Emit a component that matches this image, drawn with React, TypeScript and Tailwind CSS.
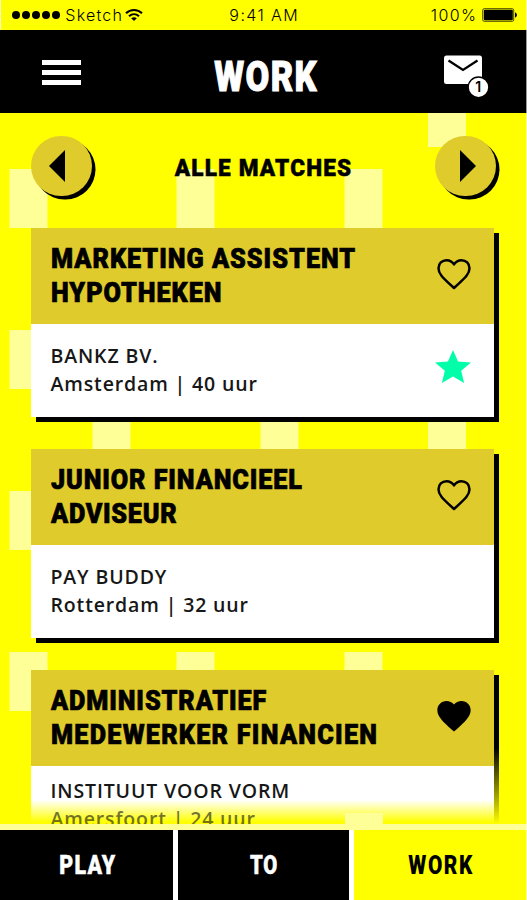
import React from "react";

interface Job {
   title: string[];
   spacing: string[];
   company: string;
   place: string;
   liked?: boolean;
   starred?: boolean;
   faded?: boolean;
}

const jobs: Job[] = [
   {
      title: ["MARKETING ASSISTENT", "HYPOTHEKEN"],
      spacing: ["tracking-[1.1px]", "tracking-[1.1px]"],
      company: "BANKZ BV.",
      place: "Amsterdam | 40 uur",
      starred: true,
   },
   {
      title: ["JUNIOR FINANCIEEL", "ADVISEUR"],
      spacing: ["tracking-[1px]", "tracking-[0.8px]"],
      company: "PAY BUDDY",
      place: "Rotterdam | 32 uur",
   },
   {
      title: ["ADMINISTRATIEF", "MEDEWERKER FINANCIEN"],
      spacing: ["tracking-[1px]", "tracking-[1.4px]"],
      company: "INSTITUUT VOOR VORM",
      place: "Amersfoort | 24 uur",
      liked: true,
      faded: true,
   },
];

// pale blocks of the wallpaper: x, y, height
const blocks = [
   [428, 0, 34],
   [9.5, 56, 59],
   [176.5, 56, 59],
   [344.5, 56, 59],
   [9.5, 217, 59],
   [92.5, 297, 59],
   [260.5, 297, 59],
   [428, 297, 59],
   [9.5, 378, 59],
   [9.5, 539, 59],
   [176.5, 539, 59],
   [344.5, 539, 59],
];

const StatusBar: React.FC = () => (
   <div className="flex h-[29.5px] shrink-0 items-center border-l border-[#ffffc8] bg-[#ffff00] pl-[11px] font-['Inter',sans-serif] text-[16px] font-light text-black">
      <div className="flex gap-[1.6px]">
         {[1, 2, 3, 4, 5].map((dot) => (
            <span key={dot} className="h-[8.3px] w-[8.3px] rounded-full bg-black" />
         ))}
      </div>
      <span className="ml-[5.5px] w-[60px] tracking-[1.2px]">Sketch</span>
      <svg className="h-[14px] w-[18px]" viewBox="0 0 18 14" fill="none" stroke="black" strokeWidth="2">
         <path d="M1 5.2C5.5.8 12.5.8 17 5.2M4 8.3C7 5.5 11 5.5 14 8.3" />
         <path d="M6.2 10.2C8 8.8 10 8.8 11.8 10.2L9 13Z" fill="black" stroke="none" />
      </svg>
      <span className="ml-[86px] w-[201.5px] tracking-[1.4px]">9:41 AM</span>
      <span className="w-[51.5px] tracking-[1.4px]">100%</span>
      <svg className="h-[14px] w-[36px]" viewBox="0 0 36 14">
         <rect x="0.7" y="0.7" width="31" height="12.6" rx="1.5" fill="none" stroke="#4a4a00" strokeWidth="1" />
         <rect x="1.8" y="1.8" width="29" height="10.4" rx="1" />
         <path d="M33 4.5C35.6 5 35.6 9 33 9.5Z" />
      </svg>
   </div>
);

const Header: React.FC = () => (
   <header className="flex h-[83.5px] shrink-0 items-center justify-between bg-black pl-[42px] pr-[37px]">
      <div className="mt-[3px] flex w-[39px] flex-col gap-[5px]">
         <span className="h-[5px] bg-white" />
         <span className="h-[5px] bg-white" />
         <span className="h-[5px] bg-white" />
      </div>
      <h1 className="ml-[7px] mt-[12px] scale-x-[0.82] font-['Roboto',sans-serif] text-[42px] font-black leading-[42px] tracking-[1.6px] text-white [-webkit-text-stroke:1px_#fff]">
         WORK
      </h1>
      <svg className="mt-[12px] h-[44px] w-[46px]" viewBox="0 0 46 44">
         <rect x="0" y="0.5" width="38" height="28.5" rx="2.5" fill="white" />
         <path d="M4.5 5.5L19 15L33.5 5.5" fill="none" stroke="black" strokeWidth="2.3" />
         <circle cx="34.5" cy="32.3" r="10.3" fill="white" stroke="black" strokeWidth="1.3" />
         <text x="34.3" y="37.3" textAnchor="middle" fontSize="14" fontWeight="600" fontFamily="Inter, sans-serif">
            1
         </text>
      </svg>
   </header>
);

const RoundButton: React.FC<{ next?: boolean }> = ({ next }) => (
   <button
      className={`flex h-[60px] w-[61px] items-center justify-center rounded-full bg-[#e0cb2c] shadow-[3.5px_3.5px_0_#000] ${next ? "-mr-[2px] pl-[6px]" : "pr-[8px]"}`}
   >
      <svg className="h-[32px] w-[16px]" viewBox="0 0 16 32">
         {next ? <path d="M0 0L16 16L0 32Z" /> : <path d="M16 0L0 16L16 32Z" />}
      </svg>
   </button>
);

const Heart: React.FC<{ filled?: boolean }> = ({ filled }) => (
   <svg className="h-[40px] w-[40px]" viewBox="0 0 24 24">
      {filled ? (
         <path d="M12 21.35l-1.45-1.32C5.4 15.36 2 12.28 2 8.5 2 5.42 4.42 3 7.5 3c1.74 0 3.41.81 4.5 2.09C13.09 3.81 14.76 3 16.5 3 19.58 3 22 5.42 22 8.5c0 3.78-3.4 6.86-8.55 11.54L12 21.35z" />
      ) : (
         <path
            d="M12 20.4L9.3 17.9C5.3 14.2 2.7 11.8 2.7 8.5C2.7 5.8 4.8 3.7 7.5 3.7C9.3 3.7 10.9 4.5 12 6.2C13.1 4.5 14.7 3.7 16.5 3.7C19.2 3.7 21.3 5.8 21.3 8.5C21.3 11.8 18.7 14.2 14.7 17.9Z"
            fill="none"
            stroke="black"
            strokeWidth="1.5"
            strokeLinejoin="round"
         />
      )}
   </svg>
);

const JobCard: React.FC<{ job: Job }> = ({ job }) => (
   <article className="flex h-[188.5px] shrink-0 flex-col shadow-[5px_5px_0_#000]">
      <div className="flex h-[95.5px] shrink-0 justify-between bg-[#e0cb2c] px-[20px] pt-[13.5px]">
         <h2 className="w-[370px] font-['Roboto',sans-serif] text-[28px] font-black leading-[34px] text-black [-webkit-text-stroke:0.7px_#000]">
            {job.title.map((line, i) => (
               <span
                  key={line}
                  className={`block w-max origin-left scale-x-[0.9] whitespace-nowrap ${job.spacing[i]}`}
               >
                  {line}
               </span>
            ))}
         </h2>
         <div className="mt-[12.5px]">
            <Heart filled={job.liked} />
         </div>
      </div>
      <div
         className={`flex grow justify-between pl-[20px] pr-[23px] ${
            job.faded ? "bg-[linear-gradient(#fff_34px,#ffff00_56px)] pt-[11px]" : "bg-white pt-[18px]"
         }`}
      >
         <div className="font-['Open_Sans',sans-serif] text-[19.5px] font-semibold leading-[28px] tracking-[0.86px] text-[#171717]">
            <p className="w-max">{job.company}</p>
            <p className={`w-max ${job.faded ? "opacity-60" : ""}`}>{job.place}</p>
         </div>
         {job.starred && (
            <svg className="mt-[8px] h-[33px] w-[36px]" viewBox="2 2 20 19" preserveAspectRatio="none">
               <path
                  fill="#00ffa8"
                  d="M12 17.27L18.18 21l-1.64-7.03L22 9.24l-7.19-.61L12 2 9.19 8.63 2 9.24l5.46 4.73L5.82 21z"
               />
            </svg>
         )}
      </div>
   </article>
);

const App: React.FC = () => {
   return (
      <div className="relative flex h-[900px] w-[527px] flex-col overflow-hidden bg-[#ffff00]">
         <StatusBar />
         <Header />
         <main className="relative h-[711px] shrink-0 overflow-hidden">
            <svg className="absolute inset-0 h-full w-full" viewBox="0 0 527 711">
               {blocks.map(([x, y, height]) => (
                  <rect key={`${x}-${y}`} x={x} y={y} width="38" height={height} fill="#ffff98" />
               ))}
            </svg>
            <div className="relative flex flex-col pl-[30.5px] pr-[33.5px]">
               <div className="flex h-[115px] items-center justify-between pb-[9px]">
                  <RoundButton />
                  <span className="ml-[1px] mt-[5px] scale-x-[0.92] font-['Roboto',sans-serif] text-[24.5px] font-black tracking-[1.3px] text-black [-webkit-text-stroke:0.5px_#000]">
                     ALLE MATCHES
                  </span>
                  <RoundButton next />
               </div>
               <div className="flex flex-col gap-[32.7px]">
                  {jobs.map((job) => (
                     <JobCard key={job.company} job={job} />
                  ))}
               </div>
            </div>
            <div className="absolute bottom-0 right-[28px] h-[76px] w-[5px] bg-linear-to-b from-[#ffff00]/0 to-[#ffff00]" />
            <div className="absolute bottom-0 left-[344.5px] h-[11px] w-[38px] bg-[#ffff98]" />
         </main>
         <nav className="grid h-[76px] shrink-0 grid-cols-[173px_171px_173px] gap-[5px] border-t-[6px] border-[#ffff98] bg-white font-['Roboto',sans-serif] text-[26px] font-black text-white">
            <button className="bg-black">
               <span className="ml-[3px] inline-block scale-x-[0.82] tracking-[1.6px] [-webkit-text-stroke:0.5px_#fff]">PLAY</span>
            </button>
            <button className="bg-black">
               <span className="ml-px inline-block scale-x-[0.78] tracking-[1px] [-webkit-text-stroke:0.5px_#fff]">TO</span>
            </button>
            <button className="bg-[#ffff00] text-black">
               <span className="ml-[2px] inline-block scale-x-[0.8] tracking-[2px]">WORK</span>
            </button>
         </nav>
         <div className="absolute right-0 top-0 h-full w-px bg-white/60" />
      </div>
   );
};

export default App;
